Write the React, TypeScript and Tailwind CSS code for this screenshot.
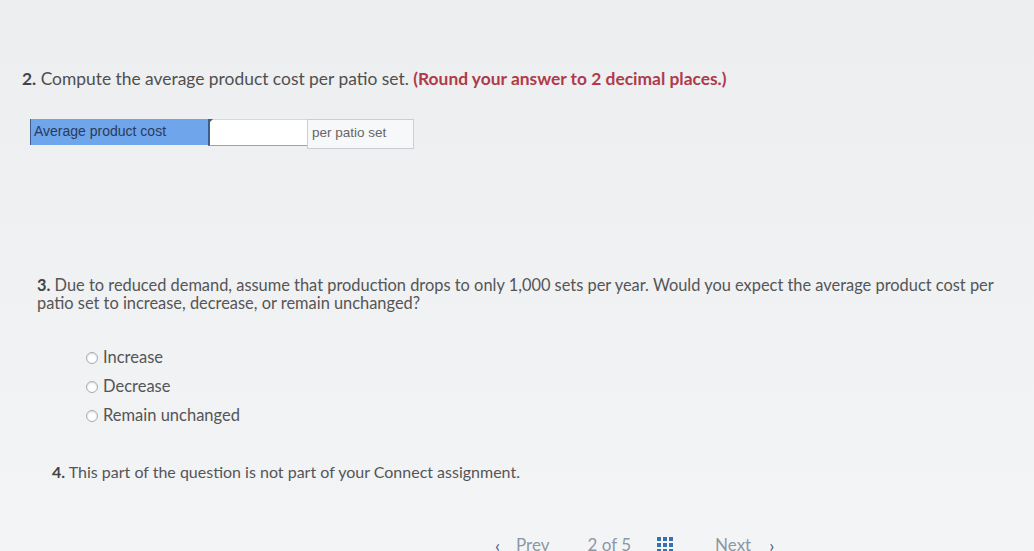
import React from "react";

function Radio({ label }: { label: string }) {
  return (
    <div className="flex items-center gap-[5px] h-[29px]">
      <span className="w-[12px] h-[12px] rounded-full border border-[#a3abb5] bg-white shadow-[inset_0_1px_2px_rgba(0,0,0,0.15)]" />
      <span className="text-[16.5px] text-[#555]">{label}</span>
    </div>
  );
}

export default function App() {
  return (
    <div
      className="w-[1034px] h-[551px] overflow-hidden bg-gradient-to-b from-[#eceef0] to-[#f3f4f6] text-[#555]"
      style={{ fontFamily: "Lato, 'Open Sans', sans-serif" }}
    >
      <div className="pt-[69px] pl-[22px]">
        <p className="text-[17.4px] leading-[20px] text-[#4f4f4f]">
          <span className="font-bold text-[#444]">2.</span> Compute the average product cost per patio set.{" "}
          <span className="font-bold text-[#b03a48]">(Round your answer to 2 decimal places.)</span>
        </p>
      </div>

      <div
        className="mt-[30px] ml-[30px] flex w-[384px] h-[30px]"
        style={{ fontFamily: "'Liberation Sans', Arial, sans-serif" }}
      >
        <div className="w-[178px] h-[26px] bg-[#6fa5ea] text-[14px] text-[#2a3a5e] px-[3px] pt-[3px] leading-[18px] border-l border-[#3e5f8e]">
          Average product cost
        </div>
        <div className="w-[99px] h-[27px] relative bg-white border-l-2 border-[#3a5f8a] border-b border-b-[#9aa3ad] border-t border-t-[#d5d9de]">
          <span className="absolute left-[-2px] top-[-1px] w-0 h-0 border-l-[5px] border-l-[#3a5f8a] border-b-[5px] border-b-transparent" />
        </div>
        <div className="flex-1 h-[30px] border border-[#c9ced4] bg-[#f7f8f9] text-[13.5px] text-[#666] px-[4px] pt-[4px] leading-[18px]">
          per patio set
        </div>
      </div>

      <div className="mt-[127px] pl-[37px] pr-[30px]">
        <p className="text-[16.4px] leading-[18px] text-[#555]">
          <span className="font-bold text-[#444]">3.</span> Due to reduced demand, assume that production drops to only 1,000 sets per year. Would you expect the average product cost per patio set to increase, decrease, or remain unchanged?
        </p>
      </div>

      <div className="mt-[31px] pl-[86px] flex flex-col">
        <Radio label="Increase" />
        <Radio label="Decrease" />
        <Radio label="Remain unchanged" />
      </div>

      <div className="mt-[33px] pl-[52px]">
        <p className="text-[16px] leading-[18px] text-[#555]">
          <span className="font-bold text-[#444]">4.</span> This part of the question is not part of your Connect assignment.
        </p>
      </div>

      <div className="mt-[54px] ml-[495px] flex items-center text-[17px] leading-[20px] text-[#8d97a3]">
        <span className="text-[#3a5f8a] text-[18px]">&#x2039;</span>
        <span className="ml-[16px]">Prev</span>
        <span className="ml-[38px]">2 of 5</span>
        <span className="ml-[26px] grid grid-cols-3 gap-[2px]">
          {Array.from({ length: 9 }).map((_, i) => (
            <span key={i} className="w-[4px] h-[4px] bg-[#3a6fb0]" />
          ))}
        </span>
        <span className="ml-[42px]">Next</span>
        <span className="ml-[18px] text-[#3a5f8a] text-[18px]">&#x203A;</span>
      </div>
    </div>
  );
}
